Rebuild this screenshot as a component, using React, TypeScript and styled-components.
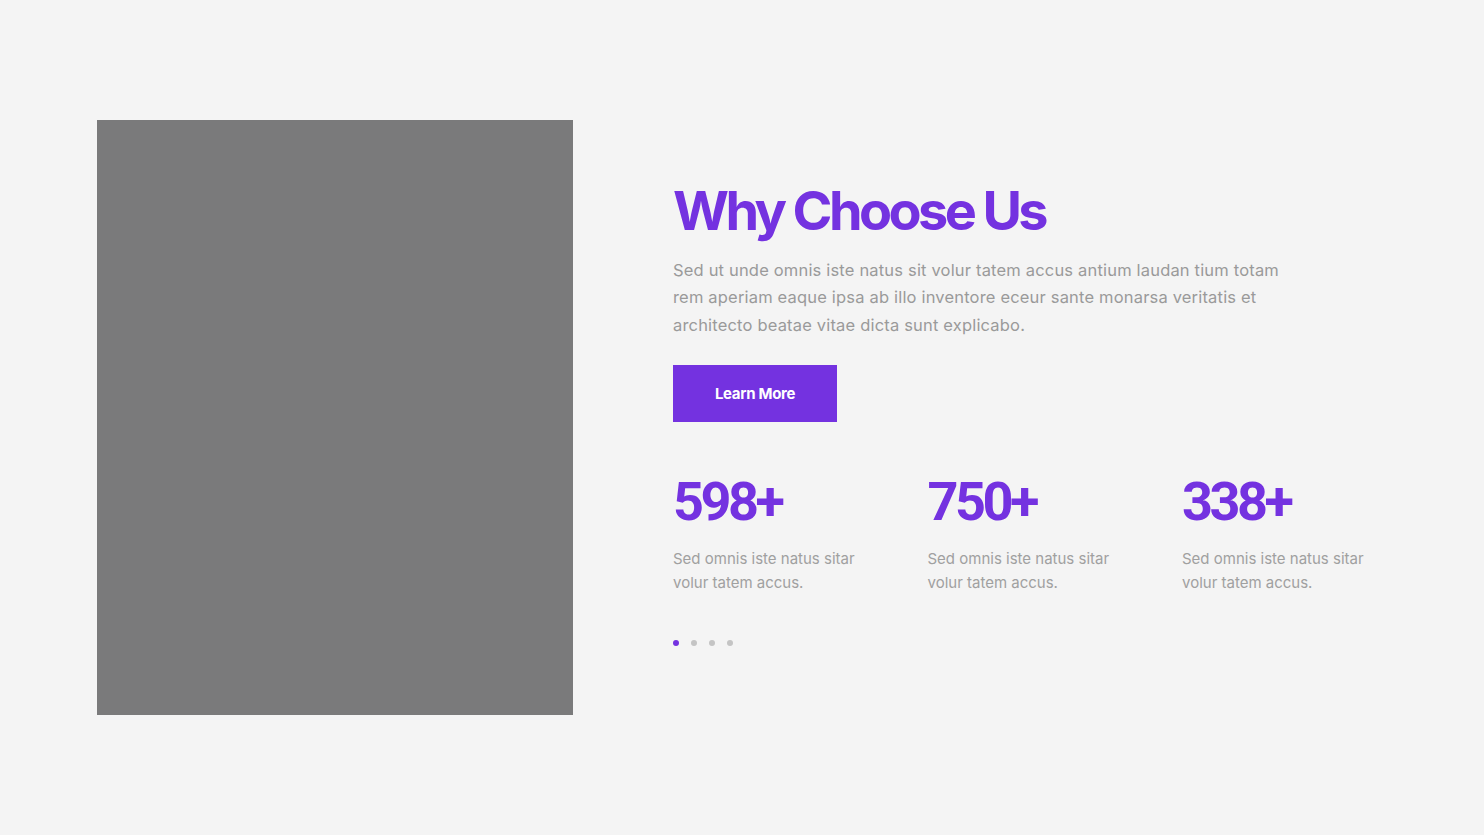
import React from "react";
import styled, { createGlobalStyle } from "styled-components";

const Global = createGlobalStyle`
  html, body { margin: 0; padding: 0; background: #f4f4f4; }
  body { font-family: Inter, "Noto Sans", Arial, sans-serif; }
  * { box-sizing: border-box; }
`;

const Section = styled.section`
  min-height: 835px;
  padding: 120px 0 120px 97px;
  display: flex;
  align-items: center;
  gap: 100px;
`;

const Photo = styled.div`
  width: 476px;
  height: 595px;
  background: #7a7a7b;
  flex-shrink: 0;
`;

const Content = styled.div`
  display: flex;
  flex-direction: column;
  align-items: flex-start;
  width: 700px;
  padding-bottom: 8px;
`;

const Title = styled.h2`
  margin: 0;
  font-size: 54px;
  line-height: 60px;
  font-weight: 700;
  letter-spacing: -3.6px;
  color: #7432e0;
`;

const Lead = styled.p`
  margin: 16px 0 0;
  width: 625px;
  font-size: 16.5px;
  line-height: 27.5px;
  color: #9a9a9a;
  letter-spacing: 0.18px;
`;

const Button = styled.button`
  margin-top: 26px;
  width: 164px;
  height: 57px;
  border: none;
  background: #7432e0;
  color: #ffffff;
  font-family: inherit;
  font-size: 15px;
  font-weight: 700;
  letter-spacing: -0.3px;
  cursor: pointer;
`;

const Stats = styled.div`
  margin-top: 50px;
  display: grid;
  grid-template-columns: repeat(3, 254.5px);
`;

const Stat = styled.div`
  display: flex;
  flex-direction: column;
`;

const Number = styled.div`
  font-family: Roboto, Inter, sans-serif;
  font-size: 54px;
  line-height: 60px;
  font-weight: 700;
  letter-spacing: -3.5px;
  color: #7432e0;
`;

const StatText = styled.div`
  margin-top: 15px;
  width: 200px;
  font-size: 15px;
  line-height: 24px;
  color: #a0a0a0;
  letter-spacing: 0;
`;

const Dots = styled.div`
  margin-top: 45px;
  display: flex;
  gap: 12px;
`;

const Dot = styled.span<{ $active?: boolean }>`
  width: 6px;
  height: 6px;
  border-radius: 50%;
  background: ${(p) => (p.$active ? "#7432e0" : "#c4c4c4")};
`;

const stats = ["598+", "750+", "338+"];

export default function App() {
  return (
    <>
      <Global />
      <Section>
        <Photo />
        <Content>
          <Title>Why Choose Us</Title>
          <Lead>
            Sed ut unde omnis iste natus sit volur tatem accus antium laudan tium totam
            rem aperiam eaque ipsa ab illo inventore eceur sante monarsa veritatis et
            architecto beatae vitae dicta sunt explicabo.
          </Lead>
          <Button>Learn More</Button>
          <Stats>
            {stats.map((n) => (
              <Stat key={n}>
                <Number>{n}</Number>
                <StatText>Sed omnis iste natus sitar volur tatem accus.</StatText>
              </Stat>
            ))}
          </Stats>
          <Dots>
            <Dot $active />
            <Dot />
            <Dot />
            <Dot />
          </Dots>
        </Content>
      </Section>
    </>
  );
}
